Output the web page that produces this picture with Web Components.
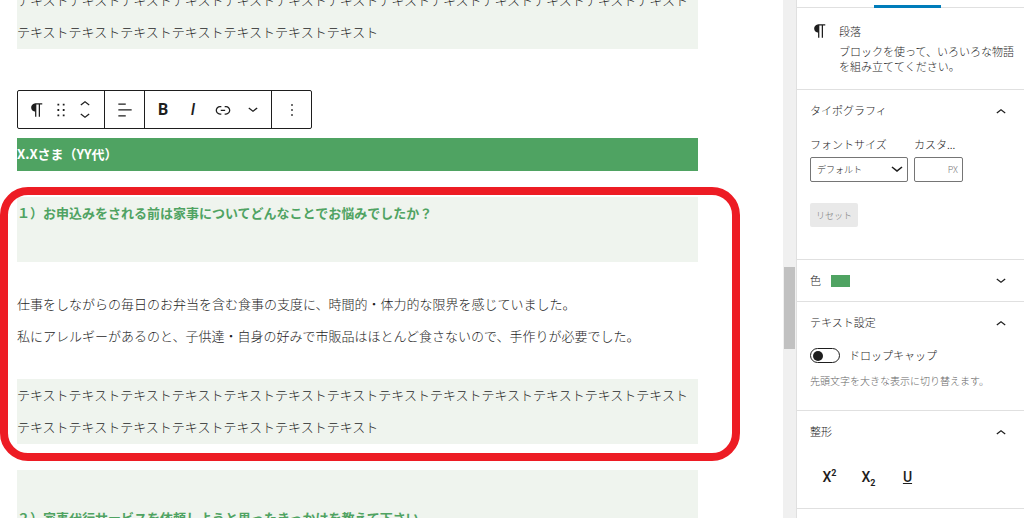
<!DOCTYPE html>
<html lang="ja">
<head>
<meta charset="utf-8">
<title>投稿の編集</title>
<style>
html, body {
    height: 100%;
    margin: 0;
}
body {
    --ink: #1e1e1e;
    --line: #e0e0e0;
    --green: #4fa362;
    --pale: #eff4ee;
    font-family: "Noto Sans CJK JP", "Liberation Sans", sans-serif;
    font-weight: 300;
    color: var(--ink);
    background: #fff;
    overflow: hidden;
}
</style>
</head>
<body>
<editor-app>
    <editor-canvas slot="canvas">
        <text-block tone="pale">テキストテキストテキストテキストテキストテキストテキストテキストテキストテキストテキストテキストテキストテキストテキストテキストテキストテキストテキストテキスト</text-block>
        <block-toolbar></block-toolbar>
        <text-block tone="title">X.Xさま（YY代）</text-block>
        <marked-area>
            <text-block tone="question">１）お申込みをされる前は家事についてどんなことでお悩みでしたか？<br><br></text-block>
            <text-block>仕事をしながらの毎日のお弁当を含む食事の支度に、時間的・体力的な限界を感じていました。<br>私にアレルギーがあるのと、子供達・自身の好みで市販品はほとんど食さないので、手作りが必要でした。</text-block>
            <text-block tone="pale">テキストテキストテキストテキストテキストテキストテキストテキストテキストテキストテキストテキストテキストテキストテキストテキストテキストテキストテキストテキスト</text-block>
        </marked-area>
        <text-block tone="question"><br>２）家事代行サービスを依頼しようと思ったきっかけを教えて下さい。</text-block>
    </editor-canvas>
    <scroll-track slot="scroll"></scroll-track>
    <settings-sidebar slot="sidebar"></settings-sidebar>
</editor-app>

<script>
const icons = {
    paragraph: ["0 0 24 24", "M18.3 4H9.9v-.1l-.9.2c-2.3.4-4 2.4-4 4.8s1.7 4.4 4 4.8l.7.1V20h1.5V5.5h2.9V20h1.5V5.5h2.7V4z"],
    drag: ["0 0 18 18", "M5 4h2V2H5v2zm6-2v2h2V2h-2zm-6 8h2V8H5v2zm6 0h2V8h-2v2zm-6 6h2v-2H5v2zm6 0h2v-2h-2v2z"],
    up: ["6 7 12 7", "M6.5 12.4L12 8l5.5 4.4-.9 1.2L12 10l-4.5 3.6-1-1.2z"],
    down: ["6 10 12 7", "M17.5 11.6L12 16l-5.5-4.4.9-1.2L12 14l4.5-3.6 1 1.2z"],
    align: ["0 0 24 24", "M4 19.8h8.9v-1.5H4v1.5zm8.9-15.6H4v1.5h8.9V4.2zm-8.9 7v1.5h16v-1.5H4z"],
    link: ["0 0 24 24", "M15.6 7.2H14v1.5h1.6c2 0 3.7 1.7 3.7 3.7s-1.7 3.7-3.7 3.7H14v1.5h1.6c2.8 0 5.2-2.3 5.2-5.2 0-2.9-2.3-5.2-5.2-5.2zM4.7 12.4c0-2 1.7-3.7 3.7-3.7H10V7.2H8.4c-2.9 0-5.2 2.3-5.2 5.2 0 2.9 2.3 5.2 5.2 5.2H10v-1.5H8.4c-2 0-3.7-1.7-3.7-3.7zm4.6.9h5.3v-1.5H9.3v1.5z"],
    more: ["0 0 24 24", "M13 19h-2v-2h2v2zm0-6h-2v-2h2v2zm0-6h-2V5h2v2z"]
}

class UiIcon extends HTMLElement {
    constructor() {
        super()
        this.attachShadow({ mode: "open" })
    }

    connectedCallback() {
        const [box, path] = icons[this.getAttribute("name")]
        this.shadowRoot.innerHTML = `
<style>
:host {
    display: block;
    width: 20px;
    height: 20px;
}
svg {
    display: block;
    width: 100%;
    height: 100%;
    fill: currentColor;
}
</style>
<svg viewBox="${box}" aria-hidden="true"><path d="${path}"/></svg>`
    }
}
customElements.define("ui-icon", UiIcon)

// Defines an element whose shadow root is a clone of the given markup
function define(name, html) {
    const template = document.createElement("template")
    template.innerHTML = html
    customElements.define(name, class extends HTMLElement {
        constructor() {
            super()
            this.attachShadow({ mode: "open" }).append(template.content.cloneNode(true))
        }
    })
}

define("editor-app", `
<style>
:host {
    display: flex;
    height: 100vh;
    overflow: hidden;
}
main {
    flex: 1;
    min-width: 0;
    overflow: hidden;
}
</style>
<main><slot name="canvas"></slot></main>
<slot name="scroll"></slot>
<slot name="sidebar"></slot>`)

/* the post is scrolled so its first block is cut by the top edge */
define("editor-canvas", `
<style>
:host {
    display: flex;
    flex-direction: column;
    margin-top: -16px;
    padding: 0 85px 0 17px;
}
</style>
<slot></slot>`)

define("text-block", `
<style>
:host {
    display: block;
    margin-bottom: 26px;
    padding-bottom: 1px;
    font-size: 13px;
    line-height: 32px;
}
:host([tone="pale"]), :host([tone="question"]) {
    background: var(--pale);
}
:host([tone="question"]) {
    color: var(--green);
    font-weight: 700;
}
:host([tone="title"]) {
    background: var(--green);
    color: #fff;
    font-weight: 700;
}
</style>
<slot></slot>`)

define("marked-area", `
<style>
:host {
    display: block;
    position: relative;
}
.frame {
    position: absolute;
    inset: -10px -42px 9px -17px;
    border: 8px solid #ed1c24;
    border-radius: 28px;
    pointer-events: none;
}
</style>
<slot></slot>
<div class="frame"></div>`)

define("block-toolbar", `
<style>
:host {
    display: flex;
    align-self: flex-start;
    margin: 15px 0 9px;
    border: 1px solid var(--ink);
    border-radius: 2px;
    background: #fff;
}
.group {
    display: flex;
    align-items: center;
    height: 37px;
}
.group + .group {
    border-left: 1px solid var(--ink);
}
.block {
    padding: 0 7px;
}
.format {
    padding: 0 3px;
}
button {
    display: flex;
    align-items: center;
    justify-content: center;
    padding: 0;
    border: 0;
    background: none;
    color: inherit;
    width: 39px;
    height: 37px;
    font: 700 16px/20px Roboto, sans-serif;
}
.block button {
    width: 24px;
}
.format button {
    width: 30px;
}
.drag ui-icon {
    width: 16px;
    height: 16px;
}
.movers {
    display: flex;
    flex-direction: column;
    gap: 7px;
}
.movers button {
    height: 6px;
}
.chevron {
    width: 10px;
    height: 6px;
}
i {
    font-weight: 500;
}
</style>
<div class="group block">
    <button aria-label="段落"><ui-icon name="paragraph"></ui-icon></button>
    <button class="drag" aria-label="ドラッグ"><ui-icon name="drag"></ui-icon></button>
    <div class="movers">
        <button aria-label="上に移動"><ui-icon class="chevron" name="up"></ui-icon></button>
        <button aria-label="下に移動"><ui-icon class="chevron" name="down"></ui-icon></button>
    </div>
</div>
<div class="group">
    <button aria-label="配置"><ui-icon name="align"></ui-icon></button>
</div>
<div class="group format">
    <button aria-label="太字">B</button>
    <button aria-label="イタリック"><i>I</i></button>
    <button aria-label="リンク"><ui-icon name="link"></ui-icon></button>
    <button aria-label="その他"><ui-icon class="chevron" name="down"></ui-icon></button>
</div>
<div class="group">
    <button aria-label="オプション"><ui-icon name="more"></ui-icon></button>
</div>`)

define("scroll-track", `
<style>
:host {
    display: flex;
    flex-direction: column;
    box-sizing: border-box;
    flex: 0 0 13px;
    padding: 0 1px;
    background: #f0f0f0;
}
.before {
    flex: 267;
}
.thumb {
    flex: 82;
    background: #c1c1c1;
}
.after {
    flex: 169;
}
</style>
<div class="before"></div>
<div class="thumb"></div>
<div class="after"></div>`)

define("sidebar-panel", `
<style>
:host {
    display: block;
    border-bottom: 1px solid var(--line);
}
h2 {
    margin: 0;
    font: inherit;
}
button {
    display: flex;
    align-items: center;
    gap: 10px;
    width: 100%;
    height: 41px;
    padding: 0 18px 0 13px;
    border: 0;
    background: none;
    color: inherit;
    font: inherit;
    text-align: left;
}
ui-icon {
    width: 10px;
    height: 6px;
    margin-left: auto;
}
.down, :host([collapsed]) .up {
    display: none;
}
:host([collapsed]) .down {
    display: block;
}
</style>
<h2><button>
    <slot name="title"></slot>
    <ui-icon class="up" name="up"></ui-icon>
    <ui-icon class="down" name="down"></ui-icon>
</button></h2>
<slot></slot>`)

define("settings-sidebar", `
<style>
:host {
    display: block;
    box-sizing: border-box;
    flex: 0 0 228px;
    overflow: hidden;
    border-left: 1px solid var(--line);
    font-size: 11px;
    line-height: 15px;
}
nav {
    display: flex;
    height: 7px;
    border-bottom: 1px solid var(--line);
}
nav button {
    box-sizing: border-box;
    width: 77px;
    height: 8px;
    padding: 0;
    border: 0;
    background: none;
}
nav .active {
    width: 67px;
    border-bottom: 3px solid #007cba;
}
.card {
    display: grid;
    grid-template-columns: 20px 1fr;
    align-items: center;
    gap: 3px 9px;
    padding: 13px 8px 15px 13px;
    border-bottom: 1px solid var(--line);
}
.card h2, .card p {
    margin: 0;
    font: inherit;
}
.card p {
    grid-column: 2;
}
.swatch {
    width: 19px;
    height: 12px;
    background: var(--green);
}
.typography {
    padding: 5px 13px 32px;
}
.fields {
    display: flex;
    gap: 6px;
}
.field {
    display: flex;
    flex-direction: column;
    gap: 5px;
}
.field label {
    line-height: 16px;
    white-space: nowrap;
}
.select {
    display: grid;
    align-items: center;
}
.select > * {
    grid-area: 1 / 1;
}
.select ui-icon {
    justify-self: end;
    width: 12px;
    height: 7px;
    margin-right: 5px;
    pointer-events: none;
}
select {
    appearance: none;
    box-sizing: border-box;
    width: 98px;
    height: 25px;
    padding: 0 20px 0 6px;
    border: 1px solid #757575;
    border-radius: 2px;
    background: #fff;
    color: inherit;
    font: inherit;
    font-size: 9px;
}
.unit {
    display: flex;
    align-items: center;
    box-sizing: border-box;
    width: 49px;
    height: 25px;
    padding: 0 4px;
    border: 1px solid #757575;
    border-radius: 2px;
    color: #757575;
    font-size: 9px;
}
.unit input {
    flex: 1;
    min-width: 0;
    padding: 0;
    border: 0;
    outline: 0;
    background: none;
    font: inherit;
}
.reset {
    display: block;
    height: 24px;
    margin-top: 21px;
    padding: 0 6px;
    border: 0;
    border-radius: 2px;
    background: #e9e9e9;
    color: #757575;
    font: inherit;
    font-size: 9px;
}
.text {
    padding: 5px 13px 21px;
}
.toggle {
    display: flex;
    align-items: center;
    gap: 9px;
}
.toggle input {
    appearance: none;
    display: flex;
    align-items: center;
    box-sizing: border-box;
    width: 30px;
    height: 15px;
    margin: 0;
    padding: 0 2px;
    border: 1px solid var(--ink);
    border-radius: 8px;
}
.toggle input::before {
    content: "";
    width: 10px;
    height: 10px;
    border-radius: 50%;
    background: var(--ink);
}
.hint {
    margin: 10px 0 0;
    color: #666;
    font-size: 10px;
    line-height: 16px;
}
.shape {
    display: flex;
    padding: 10px 13px 16px;
}
.shape button {
    width: 39px;
    height: 30px;
    padding: 0;
    border: 0;
    background: none;
    color: inherit;
    font: 500 14px/20px Roboto, sans-serif;
}
sup, sub {
    font-size: 9px;
    font-weight: 700;
    line-height: 0;
}
u {
    text-decoration-thickness: 1px;
    text-underline-offset: 1px;
}
</style>
<nav>
    <button aria-label="投稿"></button>
    <button class="active" aria-label="ブロック"></button>
</nav>
<section class="card">
    <ui-icon name="paragraph"></ui-icon>
    <h2>段落</h2>
    <p>ブロックを使って、いろいろな物語を組み立ててください。</p>
</section>
<sidebar-panel>
    <span slot="title">タイポグラフィ</span>
    <div class="typography">
        <div class="fields">
            <div class="field">
                <label for="size">フォントサイズ</label>
                <div class="select">
                    <select id="size"><option>デフォルト</option></select>
                    <ui-icon name="down"></ui-icon>
                </div>
            </div>
            <div class="field">
                <label for="custom">カスタ...</label>
                <div class="unit"><input id="custom" type="text" inputmode="numeric"><span>PX</span></div>
            </div>
        </div>
        <button class="reset" disabled>リセット</button>
    </div>
</sidebar-panel>
<sidebar-panel collapsed>
    <span slot="title">色</span>
    <span slot="title" class="swatch"></span>
</sidebar-panel>
<sidebar-panel>
    <span slot="title">テキスト設定</span>
    <div class="text">
        <label class="toggle"><input type="checkbox" role="switch">ドロップキャップ</label>
        <p class="hint">先頭文字を大きな表示に切り替えます。</p>
    </div>
</sidebar-panel>
<sidebar-panel>
    <span slot="title">整形</span>
    <div class="shape">
        <button aria-label="上付き">X<sup>2</sup></button>
        <button aria-label="下付き">X<sub>2</sub></button>
        <button aria-label="下線"><u>U</u></button>
    </div>
</sidebar-panel>`)
</script>
</body>
</html>
